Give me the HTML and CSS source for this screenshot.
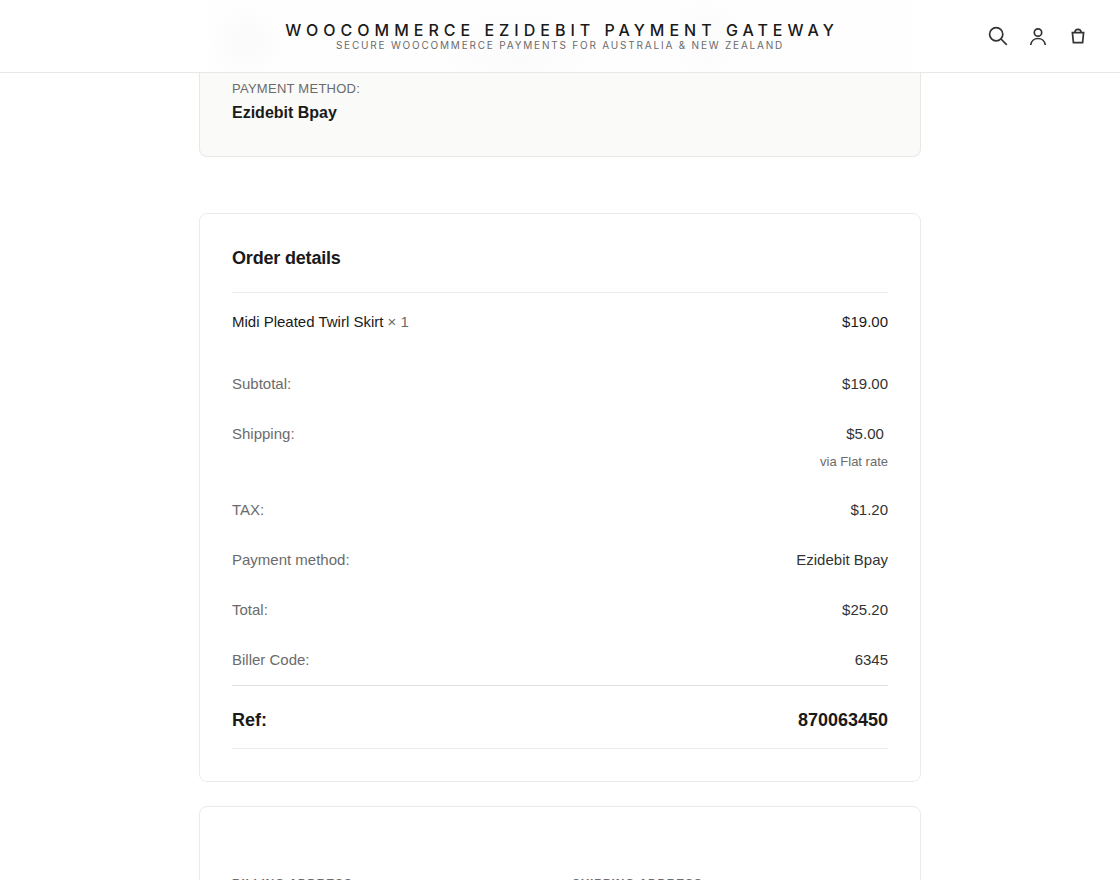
FILE: index.html
```html
<!DOCTYPE html>
<html lang="en">
    <head>
        <meta charset="utf-8">
        <title>Order received</title>
        <link rel="stylesheet" href="styles.css">
    </head>
    <body>
        <header class="site-header">
            <div class="branding">
                <a class="site-title" href="#">WooCommerce Ezidebit Payment Gateway</a>
                <div class="tagline">Secure WooCommerce payments for Australia &amp; New Zealand</div>
            </div>
            <nav class="header-icons">
                <button type="button" aria-label="Search">
                    <svg width="24" height="24" viewBox="0 0 24 24"><circle cx="10.2" cy="10.2" r="6.6"/><path d="M15 15l5.8 5.8"/></svg>
                </button>
                <a href="#" aria-label="Account">
                    <svg width="24" height="24" viewBox="0 0 24 24"><circle cx="12" cy="8.5" r="3.7"/><path d="M4.7 21c.4-3.9 3.5-6.500 7.300-6.500s6.900 2.600 7.300 6.500"/></svg>
                </a>
                <a href="#" aria-label="Cart">
                    <svg width="24" height="24" viewBox="0 0 24 24"><path d="M6.4 8.700h11.200l-1 9.900H7.400z"/><path d="M8.800 8.500c.2-2.100 1.400-3.200 3.200-3.200s3 1.100 3.200 3.200"/></svg>
                </a>
            </nav>
        </header>
        <main class="content">
            <section class="overview">
                <div class="overview-label">Payment method:</div>
                <strong class="overview-value">Ezidebit Bpay</strong>
            </section>
            <section class="card">
                <h2 class="card-title">Order details</h2>
                <table class="order-table">
                    <tbody>
                        <tr class="product">
                            <td>Midi Pleated Twirl Skirt <span class="qty">&times;&nbsp;1</span></td>
                            <td>$19.00</td>
                        </tr>
                    </tbody>
                    <tfoot>
                        <tr><th scope="row">Subtotal:</th><td>$19.00</td></tr>
                        <tr><th scope="row">Shipping:</th><td>$5.00&nbsp;<small>via Flat rate</small></td></tr>
                        <tr><th scope="row">TAX:</th><td>$1.20</td></tr>
                        <tr><th scope="row">Payment method:</th><td>Ezidebit Bpay</td></tr>
                        <tr><th scope="row">Total:</th><td>$25.20</td></tr>
                        <tr><th scope="row">Biller Code:</th><td>6345</td></tr>
                        <tr class="ref"><th scope="row">Ref:</th><td>870063450</td></tr>
                    </tfoot>
                </table>
            </section>
            <section class="card addresses">
                <h2 class="address-title">Billing address</h2>
                <h2 class="address-title">Shipping address</h2>
            </section>
        </main>
    </body>
</html>
```
FILE: styles.css
```css
* {
    box-sizing: border-box;
}
body {
    margin: 0;
    height: 100vh;
    overflow: hidden;
    background: #fff;
    color: #1a1a1a;
    font: 15px/26px "Liberation Sans", Arial, sans-serif;
}

.site-header {
    display: grid;
    grid-template-columns: 1fr auto 1fr;
    align-items: center;
    height: 73px;
    padding: 0 30px;
    border-bottom: 1px solid #e8e8e8;
    background:
        radial-gradient(circle at 22% 42px, #fafafa, transparent 36px),
        radial-gradient(ellipse 80px 40px at 46% 50px, #fbfbfb, transparent),
        radial-gradient(circle at 63% 38px, #fbfbfb, transparent 40px),
        linear-gradient(90deg, #fff 18%, #fefefe 19%, #fefefe 81%, #fff 82%);
    font-family: Inter, sans-serif;
    text-transform: uppercase;
}
.branding {
    grid-column: 2;
    display: flex;
    flex-direction: column;
    align-items: center;
    padding-top: 2px;
}
.site-title {
    padding-left: 4px;
    color: #1a1a1a;
    font-size: 16px;
    font-weight: 500;
    line-height: 16px;
    letter-spacing: 5px;
    text-decoration: none;
}
.tagline {
    color: #6b6b6b;
    font-size: 10px;
    line-height: 14px;
    letter-spacing: 0.18em;
}
.header-icons {
    display: flex;
    justify-content: flex-end;
    gap: 16px;
}
.header-icons a,
.header-icons button {
    display: flex;
    padding: 0;
    border: 0;
    background: none;
}
.header-icons svg {
    fill: none;
    stroke: #333;
    stroke-width: 1.7;
}

.content {
    max-width: 722px;
    margin: 0 auto;
}
.overview {
    margin-bottom: 56px;
    padding: 5px 32px 30px;
    border: 1px solid #e8e8e8;
    border-top: 0;
    border-radius: 0 0 8px 8px;
    background: #fafaf8;
}
.overview-label {
    color: #6b6b6b;
    font-size: 13px;
    line-height: 22px;
    letter-spacing: 0.02em;
    text-transform: uppercase;
}
.overview-value {
    display: block;
    font-size: 16px;
}

.card {
    margin-bottom: 24px;
    padding: 32px;
    border: 1px solid #ebebeb;
    border-radius: 8px;
    background: #fff;
}
.card-title {
    margin: 0;
    padding-bottom: 22px;
    border-bottom: 1px solid #ebebeb;
    font-size: 18px;
    line-height: 24px;
    letter-spacing: -0.01em;
}

.order-table {
    width: 100%;
    border-collapse: separate;
    border-spacing: 0;
}
.order-table th,
.order-table td {
    padding: 12px 0;
    vertical-align: top;
}
.order-table th {
    color: #6b6b6b;
    font-weight: 400;
    text-align: left;
}
.order-table td {
    color: #333;
}
.order-table td:last-child {
    text-align: right;
}
.order-table .product td {
    padding: 16px 0 24px;
    color: #1a1a1a;
}
.order-table .qty {
    color: #6b6b6b;
}
.order-table small {
    display: block;
    margin-top: 4px;
    color: #6b6b6b;
    font-size: 13px;
    line-height: 22px;
}
.order-table .ref th,
.order-table .ref td {
    padding: 21px 0 15px;
    border-top: 1px solid #e0e0e0;
    border-bottom: 1px solid #ebebeb;
    color: #1a1a1a;
    font-size: 18px;
    font-weight: 700;
}

.addresses {
    display: grid;
    grid-template-columns: 1fr 1fr;
    gap: 24px;
    padding-top: 64px;
}
.address-title {
    margin: 0;
    color: #6b6b6b;
    font-size: 12px;
    letter-spacing: 0.06em;
    text-transform: uppercase;
}
```
